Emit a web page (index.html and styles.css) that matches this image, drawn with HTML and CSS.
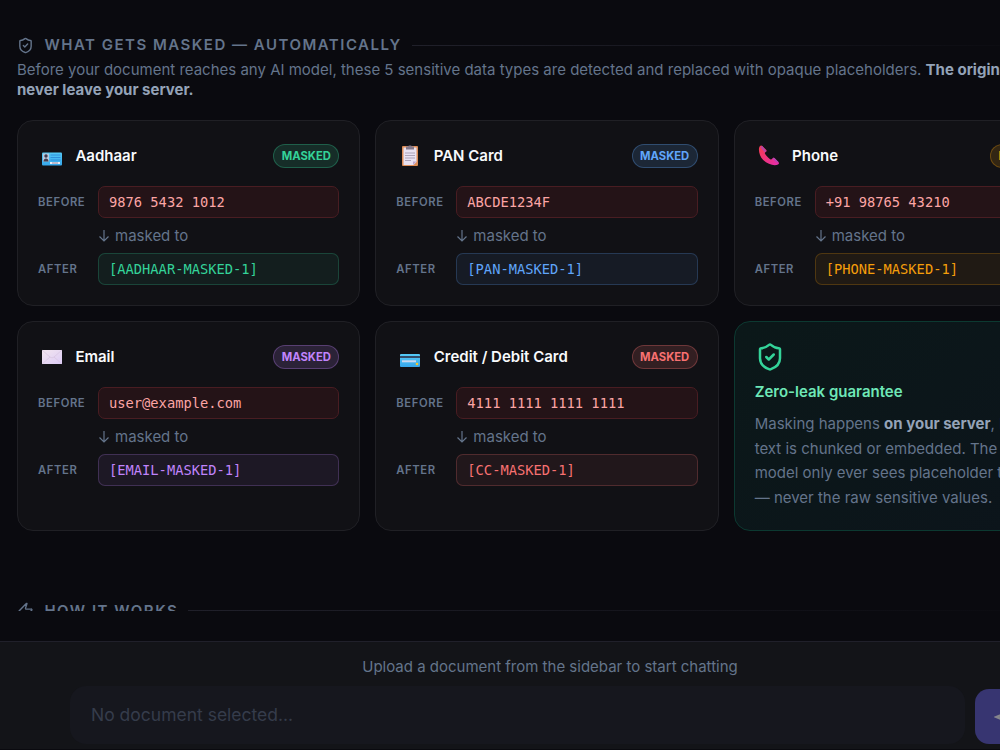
FILE: index.html
```
<!DOCTYPE html>
<html lang="en">
<head>
<meta charset="utf-8">
<title>Document privacy</title>
<link rel="stylesheet" href="styles.css">
</head>
<body>
<div class="app">
  <main class="scroll">
    <div class="section-title first">
      <svg class="title-icon" viewBox="0 0 24 24"><path d="M20 13c0 5-3.500 7.500-7.660 8.950a1 1 0 0 1-.67-.01C7.500 20.500 4 18 4 13V6a1 1 0 0 1 1-1c2 0 4.500-1.200 6.240-2.720a1.170 1.170 0 0 1 1.520 0C14.510 3.810 17 5 19 5a1 1 0 0 1 1 1z"/><path d="m9 12 2 2 4-4"/></svg>
      <span>WHAT GETS MASKED — AUTOMATICALLY</span><i class="rule"></i>
    </div>
    <p class="intro"><span>Before your document reaches any AI model, these 5 sensitive data types are detected and replaced with opaque placeholders. <b>The original</b></span><br><b>never leave your server.</b></p>
    <div class="grid">
      <article class="card green">
        <header><svg class="emoji" viewBox="0 0 24 24"><defs><linearGradient id="sky" x2="0" y2="1"><stop stop-color="#55caf6"/><stop offset="1" stop-color="#36a7eb"/></linearGradient></defs><rect x="2" y="8.500" width="20" height="13" rx="1" fill="url(#sky)"/><rect x="3" y="9.500" width="6" height="8" fill="#b9c9dc"/><circle cx="6" cy="12" r="1.700" fill="#433b4e"/><path d="M3.500 17.500c0-4 5-4 5 0z" fill="#433b4e"/><path d="M10.500 11h10M10.500 13.500h10M10.500 16h10" stroke="#2e8ad8" stroke-width=".9"/><path d="M10 19h10" stroke="#e9edf5" stroke-width="2"/><path d="M12 19h6" stroke="#806f91" stroke-width=".8"/></svg><h3>Aadhaar</h3><span class="badge">MASKED</span></header>
        <div class="row"><label>BEFORE</label><code class="before">9876 5432 1012</code></div>
        <div class="arrow"><svg viewBox="0 0 12 14"><path d="M6 1v11M1.500 7.500 6 12l4.500-4.500"/></svg>masked to</div>
        <div class="row"><label>AFTER</label><code class="after">[AADHAAR-MASKED-1]</code></div>
      </article>
      <article class="card blue">
        <header><svg class="emoji" viewBox="0 0 24 24"><rect x="4" y="2" width="16" height="20" rx="1" fill="#dc8c57"/><path d="M5.500 3.500h13V18l-3 3h-10z" fill="#e8e1f1"/><path d="M15 21v-3.500h3.500z" fill="#bda7cf"/><path d="M8 2.500h2c0-1.500 4-1.500 4 0h2v3H8z" fill="#837889"/><path d="M7 9h10M7 11.500h10M7 14h10M7 16.500h6" stroke="#9d93a9" stroke-width=".8"/></svg><h3>PAN Card</h3><span class="badge">MASKED</span></header>
        <div class="row"><label>BEFORE</label><code class="before">ABCDE1234F</code></div>
        <div class="arrow"><svg viewBox="0 0 12 14"><path d="M6 1v11M1.500 7.500 6 12l4.500-4.500"/></svg>masked to</div>
        <div class="row"><label>AFTER</label><code class="after">[PAN-MASKED-1]</code></div>
      </article>
      <article class="card amber">
        <header><svg class="emoji" viewBox="0 0 24 24"><defs><linearGradient id="pink" x2="1" y2="1"><stop stop-color="#f43c4c"/><stop offset="1" stop-color="#e72cac"/></linearGradient></defs><path d="M3 2C.8 4.500 2 11.500 6.200 16.100 11 21 18 22 21 20.500c1.500-.8 1-2 0-3l-3-3c-1-1-2-.8-2.800.2-.8 1.100-1.800.9-3-.2-1.800-1.600-3.500-3.500-4.300-5-.7-1.300 2.600-1.800 1.400-3.500L5.500 2.300C4.700 1.300 3.800 1 3 2z" fill="url(#pink)"/><path d="m5 1.800 4.500 5.100-1.700 1.400-4.200-5z" fill="#b246a7"/><path d="m16.800 13.400 4.500 4.700-1.200.7-4.500-4z" fill="#b246b7"/></svg><h3>Phone</h3><span class="badge">MASKED</span></header>
        <div class="row"><label>BEFORE</label><code class="before">+91 98765 43210</code></div>
        <div class="arrow"><svg viewBox="0 0 12 14"><path d="M6 1v11M1.500 7.500 6 12l4.500-4.500"/></svg>masked to</div>
        <div class="row"><label>AFTER</label><code class="after">[PHONE-MASKED-1]</code></div>
      </article>
      <article class="card purple">
        <header><svg class="emoji" viewBox="0 0 24 24"><defs><linearGradient id="mail" x2="1" y2="1"><stop stop-color="#f3e6ef"/><stop offset="1" stop-color="#dccbf5"/></linearGradient></defs><rect x="2" y="5" width="20" height="14" rx=".5" fill="url(#mail)"/><path d="m2 19 8-7M22 19l-8-7M2 5l8 7c1.300 1 2.700 1 4 0l8-7" fill="none" stroke="#d3bfdc" stroke-width=".6"/></svg><h3>Email</h3><span class="badge">MASKED</span></header>
        <div class="row"><label>BEFORE</label><code class="before">user@example.com</code></div>
        <div class="arrow"><svg viewBox="0 0 12 14"><path d="M6 1v11M1.500 7.500 6 12l4.500-4.500"/></svg>masked to</div>
        <div class="row"><label>AFTER</label><code class="after">[EMAIL-MASKED-1]</code></div>
      </article>
      <article class="card red">
        <header><svg class="emoji" viewBox="0 0 24 24"><rect x="2" y="9" width="20" height="13" rx="1" fill="url(#sky)"/><path d="M2 12h20" stroke="#334c68" stroke-width="2"/><path d="M4 16.300h14" stroke="#cbd8ee" stroke-width="2"/><circle cx="19" cy="19" r="1.300" fill="#f5c52e"/></svg><h3>Credit / Debit Card</h3><span class="badge">MASKED</span></header>
        <div class="row"><label>BEFORE</label><code class="before">4111 1111 1111 1111</code></div>
        <div class="arrow"><svg viewBox="0 0 12 14"><path d="M6 1v11M1.500 7.500 6 12l4.500-4.500"/></svg>masked to</div>
        <div class="row"><label>AFTER</label><code class="after">[CC-MASKED-1]</code></div>
      </article>
      <article class="card guarantee">
        <svg class="shield" viewBox="0 0 24 24"><path d="M20 13c0 5-3.500 7.500-7.660 8.950a1 1 0 0 1-.67-.01C7.500 20.500 4 18 4 13V6a1 1 0 0 1 1-1c2 0 4.500-1.200 6.240-2.720a1.170 1.170 0 0 1 1.520 0C14.510 3.810 17 5 19 5a1 1 0 0 1 1 1z"/><path d="m9 12 2 2 4-4"/></svg>
        <h3>Zero-leak guarantee</h3>
        <p>Masking happens <b>on your server</b>, before<br>text is chunked or embedded. The AI<br>model only ever sees placeholder tokens<br>— never the raw sensitive values.</p>
      </article>
    </div>
    <div class="section-title next">
      <svg class="title-icon" viewBox="0 0 24 24"><path d="M4 14a1 1 0 0 1-.78-1.630l9.900-10.200a.5.5 0 0 1 .86.460l-1.920 6.020A1 1 0 0 0 13 10h7a1 1 0 0 1 .78 1.630l-9.900 10.200a.5.5 0 0 1-.86-.460l1.920-6.020A1 1 0 0 0 11 14z"/></svg>
      <span>HOW IT WORKS</span><i class="rule"></i>
    </div>
  </main>
  <footer class="composer">
    <div class="hint">Upload a document from the sidebar to start chatting</div>
    <div class="input-row">
      <div class="input">No document selected...</div>
      <div class="send"><svg viewBox="0 0 24 24"><path d="m2 12 19-8-5 8 5 8zM2 12h14"/></svg></div>
    </div>
  </footer>
</div>
</body>
</html>
```
FILE: styles.css
```
* { box-sizing: border-box; }
body { margin: 0; background: #0a0a0f; overflow: hidden; font-family: Inter, sans-serif; font-size: 15px; color: #64748b; }
h3, p { margin: 0; }
.app { width: 1100px; height: 749px; display: flex; flex-direction: column; }
.scroll { height: 611px; flex: none; overflow: hidden; padding: 35px 23px 0 17px; }
.section-title { display: flex; align-items: center; height: 20px; font-size: 15px; font-weight: 600; letter-spacing: 1.5px; white-space: nowrap; }
.first span { padding-bottom: 2px; }
.title-icon { width: 17px; height: 17px; margin-right: 10.400px; fill: none; stroke: currentColor; stroke-width: 2; stroke-linecap: round; stroke-linejoin: round; }
.rule { flex: 1; height: 1px; margin-left: 10px; background: linear-gradient(90deg, #20202a, transparent); }
.intro { margin-top: 5px; line-height: 20px; white-space: nowrap; }
.intro b, .guarantee b { color: #94a3b8; font-weight: 700; }
.grid { display: grid; grid-template-columns: repeat(3, 1fr); grid-template-rows: 186px 210px; gap: 15px; margin-top: 20px; }
.card { --c: #34d399; border: 1px solid #202025; border-radius: 16px; background: #111115; padding: 20px; }
.card header { display: flex; align-items: center; height: 30px; margin-bottom: 15px; }
.card h3 { font-size: 15px; line-height: 20px; font-weight: 600; color: #f8fafc; }
.emoji { width: 24px; height: 24px; margin: 0 11.400px 0 2px; }
.badge { margin-left: auto; height: 24px; width: 66px; line-height: 22px; text-align: center; font-size: 11.250px; font-weight: 700; color: var(--c); border: 1px solid color-mix(in srgb, var(--c) 30%, transparent); background: color-mix(in srgb, var(--c) 15%, transparent); border-radius: 12px; }
.row { display: flex; align-items: center; height: 32px; }
.row label { width: 60px; font-size: 11.250px; font-weight: 600; letter-spacing: .6px; }
.row code { flex: 1; height: 32px; padding-left: 10px; line-height: 31px; border-radius: 7px; border: 1px solid; font-family: "DejaVu Sans Mono", monospace; font-size: 13.740px; }
.row .before { color: #fca5a5; background: #241317; border-color: #491d22; }
.row .after { color: var(--c); background: color-mix(in srgb, var(--c) 7%, transparent); border-color: color-mix(in srgb, var(--c) 22%, transparent); }
.arrow { display: flex; align-items: center; height: 35px; padding-left: 60px; }
.arrow svg { width: 12px; height: 14px; margin-right: 5px; fill: none; stroke: currentColor; stroke-width: 1.2; }
.blue { --c: #60a5fa; }
.amber { --c: #f59e0b; }
.purple { --c: #c084fc; }
.red { --c: #f87171; }
.guarantee { background: linear-gradient(135deg, #0b1819, #0c141b); border-color: #0c3931; white-space: nowrap; }
.shield { display: block; width: 30px; height: 30px; fill: none; stroke: #34d399; stroke-width: 2; stroke-linecap: round; stroke-linejoin: round; }
.guarantee h3 { margin: 10px 0; color: #6ee7b7; }
.guarantee p { line-height: 24.600px; }
.next { margin-top: 69px; }
.composer { margin-top: 30px; height: 108px; border-top: 1px solid #20202a; background: #131418; }
.hint { height: 44px; padding-top: 15px; line-height: 20px; text-align: center; }
.input-row { display: flex; align-items: flex-end; gap: 10px; padding-left: 70px; }
.input { width: 895px; height: 58px; padding-left: 21px; line-height: 58px; border-radius: 16px; background: #16171e; font-size: 17.500px; color: #353c4b; }
.send { width: 55px; height: 55px; border-radius: 14px; background: #373571; display: flex; align-items: center; justify-content: center; }
.send svg { width: 18px; height: 18px; fill: none; stroke: #85858c; stroke-width: 2; }
```
